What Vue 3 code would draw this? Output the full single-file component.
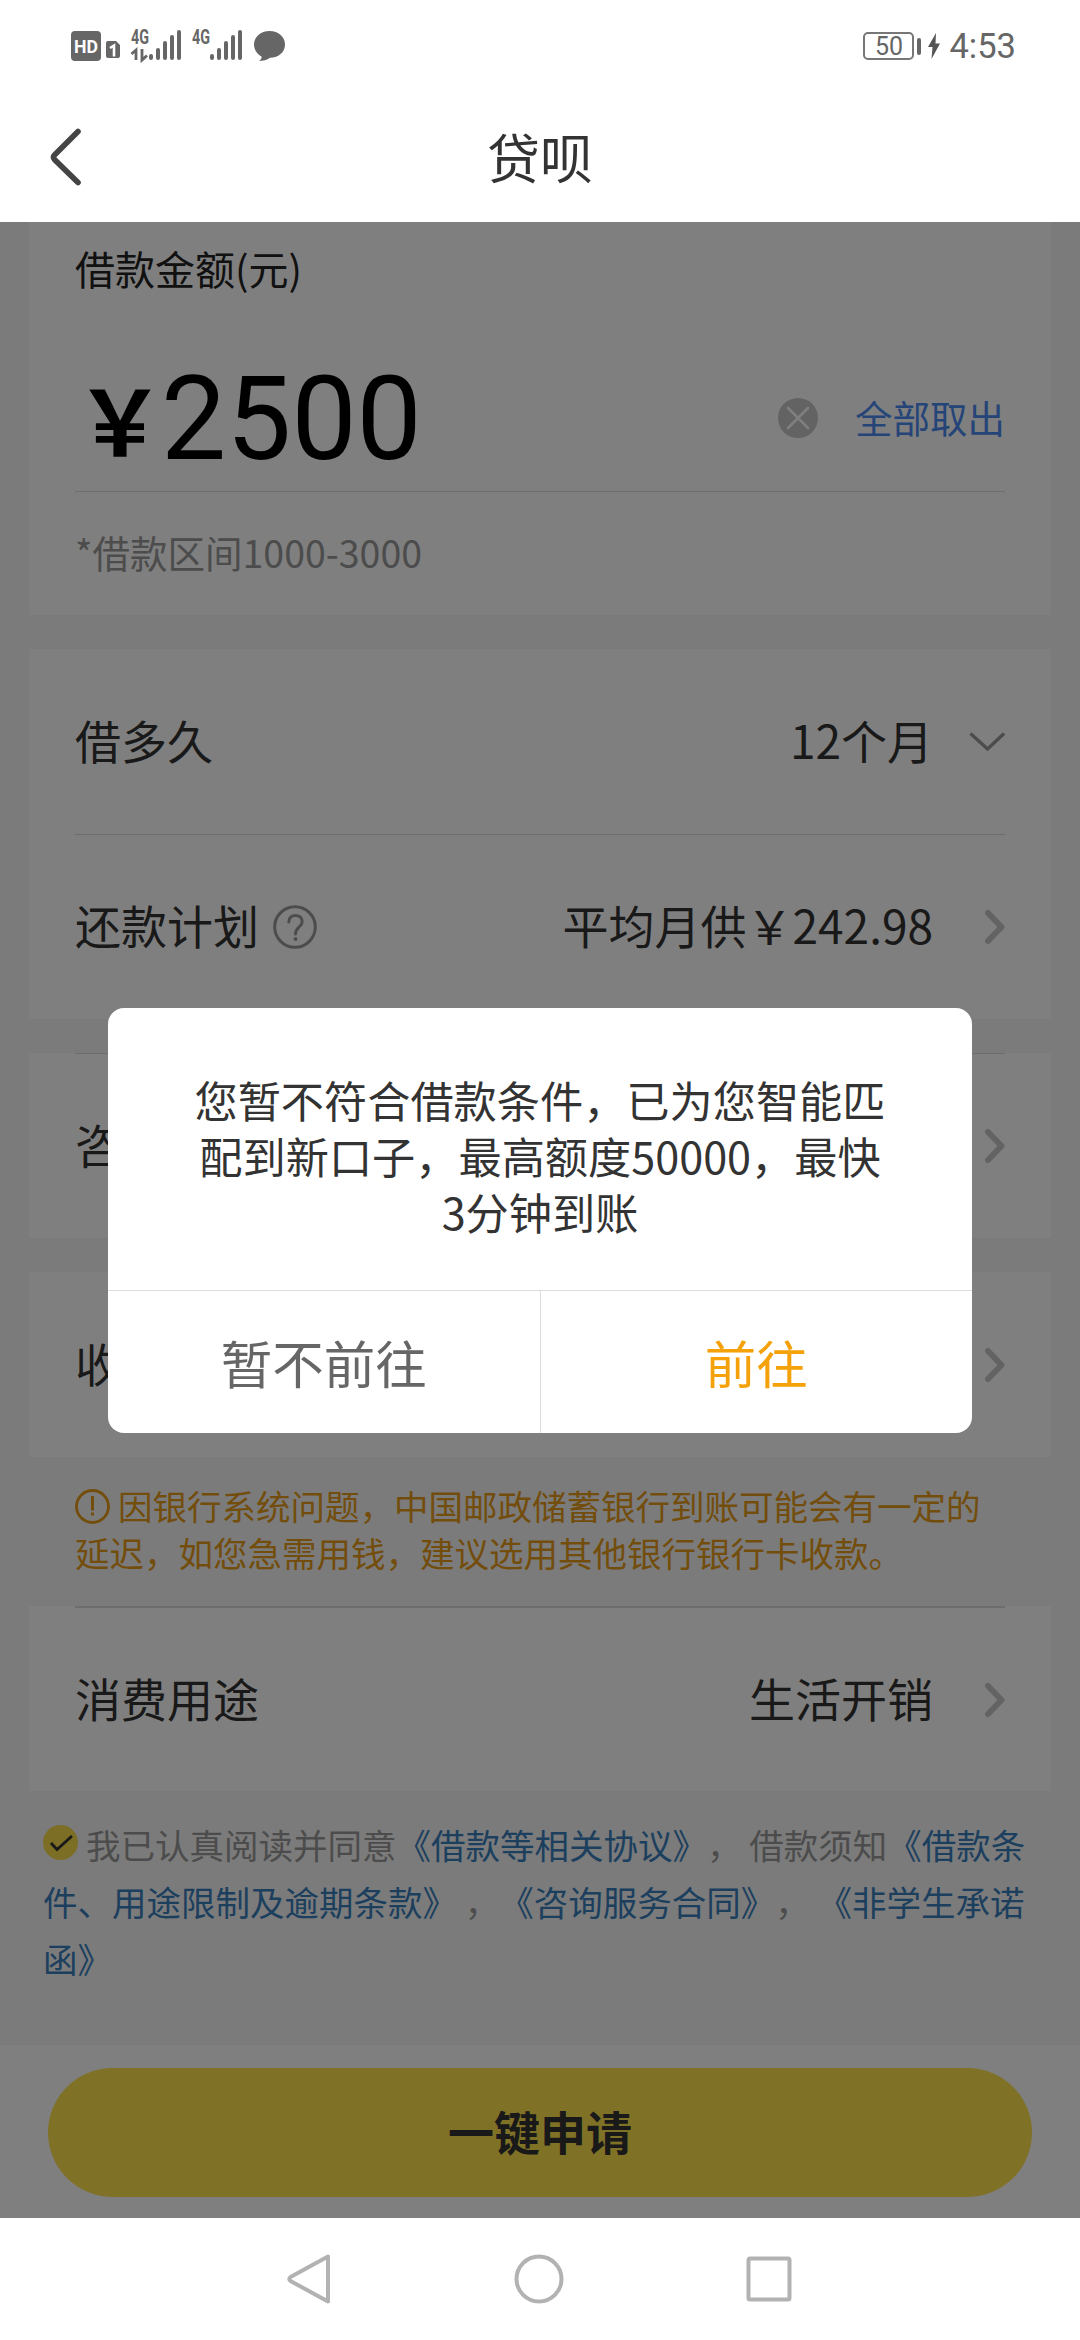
<template>
    <div class="phone">
        <header class="status-bar">
            <svg class="status-icons" width="216" height="50" viewBox="0 -8 216 50">
                <rect x="0" y="2" width="30" height="30" rx="4" fill="#666" />
                <text x="3" y="24" textLength="24" lengthAdjust="spacingAndGlyphs" class="hd">HD</text>
                <path d="M37 12h8l4 4v11q0 2-2 2H37q-2 0-2-2V14q0-2 2-2z" fill="#666" />
                <path d="M39 19l4-2.500v11" fill="none" stroke="#fff" stroke-width="2.600" />
                <text x="60" y="15" textLength="18" lengthAdjust="spacingAndGlyphs" class="net">4G</text>
                <path d="M60.500 25l4.500-4v10M71 20v11l5-4.500" fill="none" stroke="#666" stroke-width="2.800" />
                <path
                    d="M80 27v2M87 21v8M94 14v15M101 8v21M108 3v26"
                    fill="none" stroke="#666" stroke-width="4" stroke-linecap="round"
                />
                <text x="121" y="15" textLength="18" lengthAdjust="spacingAndGlyphs" class="net">4G</text>
                <path
                    d="M141 27v2M148 21v8M155 14v15M162 8v21M169 3v26"
                    fill="none" stroke="#666" stroke-width="4" stroke-linecap="round"
                />
                <path
                    d="M198.500 2c9 0 15.500 6 15.500 13.500S208 28.500 199 28.800c-3 2.200-7 3.200-11 3.200 2-1.500 3-3 2.500-4.500C186 25 183 20.500 183 15.500 183 8 189.500 2 198.500 2z"
                    fill="#666"
                />
            </svg>
            <div class="status-right">
                <span class="battery">50</span>
                <i class="battery-cap"></i>
                <svg width="12" height="26" viewBox="0 0 12 26">
                    <path d="M8 0L0 14h4.500L3.500 26 12 10.500H7.500z" fill="#555" />
                </svg>
                <span class="time">4:53</span>
            </div>
        </header>

        <nav class="title-bar">
            <svg class="back" width="36" height="62" viewBox="0 0 36 62">
                <path
                    d="M30 5.500L6.500 29Q4.500 31 6.500 33.500L30 56.500"
                    fill="none" stroke="#444" stroke-width="5.600" stroke-linecap="round"
                />
            </svg>
            <h1>贷呗</h1>
        </nav>

        <main class="content">
            <section class="card amount-card">
                <div class="amount-label">借款金额(元)</div>
                <div class="amount-row">
                    <span class="yen">￥</span>
                    <span class="amount">{{ amount }}</span>
                    <svg class="clear" width="40" height="40" viewBox="0 0 40 40">
                        <circle cx="20" cy="20" r="20" fill="#c6c6c6" />
                        <path d="M10 10l20 20M30 10L10 30" stroke="#fff" stroke-width="2.600" stroke-linecap="round" />
                    </svg>
                    <span class="take-all">全部取出</span>
                </div>
                <div class="amount-range">*借款区间1000-3000</div>
            </section>

            <template v-for="(group, index) in groups" :key="index">
                <section class="card">
                    <div
                        v-for="row in group.rows" :key="row.label"
                        class="row" :class="{ lined: row.lined, thick: row.thick }"
                    >
                        <span class="label">{{ row.label }}</span>
                        <svg v-if="row.help" class="help" width="44" height="44" viewBox="0 0 44 44">
                            <circle cx="22" cy="22" r="20.300" fill="none" stroke="#999" stroke-width="3" />
                            <path
                                d="M15.800 17c0-9 13.400-8.500 13.400-.5 0 5.500-6.700 5.500-6.700 12.500"
                                fill="none" stroke="#999" stroke-width="3" stroke-linecap="round"
                            />
                            <circle cx="22.500" cy="34" r="2" fill="#999" />
                        </svg>
                        <span class="value">{{ row.value }}</span>
                        <svg v-if="row.down" class="arrow arrow-down" width="36" height="20" viewBox="0 0 36 20">
                            <path d="M1.500 1.500L18.500 17 35 1.500" fill="none" stroke="#999" stroke-width="3.400" />
                        </svg>
                        <svg v-else class="arrow" width="21" height="36" viewBox="0 0 21 36">
                            <path
                                d="M4 4l13.500 14L4 32"
                                fill="none" stroke="#c7c7c7" stroke-width="6" stroke-linecap="round" stroke-linejoin="round"
                            />
                        </svg>
                    </div>
                </section>
                <div v-if="group.notice" class="notice">
                    <p>
                        <svg width="35" height="35" viewBox="0 0 35 35">
                            <circle cx="17.500" cy="17.500" r="16" fill="none" stroke="#e69a17" stroke-width="2.800" />
                            <path d="M17.500 7v14.500M17.500 23.500v3" stroke="#e69a17" stroke-width="3" />
                        </svg>
                        <span>{{ group.notice[0] }}</span>
                    </p>
                    <p>{{ group.notice[1] }}</p>
                </div>
            </template>

            <div class="agreement">
                <p>
                    <svg width="35" height="35" viewBox="0 0 35 35">
                        <circle cx="17.500" cy="17.500" r="17.500" fill="#f9dc4a" />
                        <path d="M8 18l6 6.500L29 11" fill="none" stroke="#333" stroke-width="2.800" />
                    </svg>
                    <span>我已认真阅读并同意<a>《借款等相关协议》</a>， 借款须知<a>《借款条</a></span>
                </p>
                <p><a>件、用途限制及逾期条款》</a> ，<a>《咨询服务合同》</a>， <a>《非学生承诺</a></p>
                <p><a>函》</a></p>
            </div>

            <footer class="apply-bar">
                <button class="apply">一键申请</button>
            </footer>

            <!-- 遮罩和提示框 -->
            <div v-if="dialogVisible" class="mask">
                <div class="dialog">
                    <div class="dialog-text">
                        <p>您暂不符合借款条件，已为您智能匹</p>
                        <p>配到新口子，最高额度50000，最快</p>
                        <p>3分钟到账</p>
                    </div>
                    <div class="dialog-actions">
                        <button @click="dialogVisible = false">暂不前往</button>
                        <button class="go" @click="dialogVisible = false">前往</button>
                    </div>
                </div>
            </div>
        </main>

        <div class="nav-keys">
            <svg width="46" height="52" viewBox="0 0 46 52">
                <path d="M42 3.500v45L4.500 28Q2 26 4.500 24z" fill="none" stroke="#b2b2b2" stroke-width="4" stroke-linejoin="round" />
            </svg>
            <svg width="50" height="50" viewBox="0 0 50 50">
                <circle cx="25" cy="25" r="22.500" fill="none" stroke="#b2b2b2" stroke-width="4" />
            </svg>
            <svg width="46" height="46" viewBox="0 0 46 46">
                <rect x="2.500" y="2.500" width="41" height="41" rx="1.500" fill="none" stroke="#b2b2b2" stroke-width="4" />
            </svg>
        </div>
    </div>
</template>

<script setup>
import { ref } from 'vue';

const amount = ref(2500)
const dialogVisible = ref(true)

// 表單分組，lined 表示該行頂部有分隔線
const groups = [
    {
        rows: [
            { label: '借多久', value: '12个月', down: true },
            { label: '还款计划', value: '平均月供￥242.98', help: true, lined: true },
        ],
    },
    { rows: [{ label: '咨', value: '', lined: true }] },
    {
        rows: [{ label: '收', value: '' }],
        notice: [
            '因银行系统问题，中国邮政储蓄银行到账可能会有一定的',
            '延迟，如您急需用钱，建议选用其他银行银行卡收款。',
        ],
    },
    { rows: [{ label: '消费用途', value: '生活开销', lined: true, thick: true }] },
]
</script>

<style>
body {
    margin: 0;
    background: #fff;
}
</style>

<style scoped>
.phone {
    width: 1080px;
    height: 2340px;
    display: flex;
    flex-direction: column;
    overflow: hidden;
    background: #fff;
    color: #333;
    font-family: "Noto Sans CJK SC", sans-serif;
    text-spacing-trim: space-all;
    white-space: nowrap;
}

p, h1 {
    margin: 0;
    font-weight: 400;
}

svg {
    flex: none;
    display: block;
}

button {
    border: 0;
    padding: 0;
    background: none;
    color: inherit;
    font-family: inherit;
}

/* 狀態欄 */
.status-bar {
    height: 92px;
    box-sizing: border-box;
    padding: 0 64px 0 71px;
    display: flex;
    align-items: center;
    justify-content: space-between;
    font-family: Roboto, sans-serif;
    color: #666;
}

.hd {
    font: 700 19px Roboto, sans-serif;
    fill: #fff;
}

.net {
    font: 700 20px Roboto, sans-serif;
    fill: #666;
}

.status-right {
    display: flex;
    align-items: center;
}

.battery {
    width: 51px;
    height: 28px;
    box-sizing: border-box;
    border: 2px solid #777;
    border-radius: 5px;
    line-height: 25px;
    font-size: 25px;
    text-align: center;
}

.battery-cap {
    width: 4px;
    height: 17px;
    margin: 0 7px 0 3px;
    border-radius: 2px;
    background: #666;
}

.time {
    margin-left: 9px;
    font-size: 34.500px;
    line-height: 36px;
}

.title-bar {
    height: 130px;
    display: grid;
    grid-template-columns: 100px 1fr 100px;
    align-items: center;
}

.back {
    margin: 0 0 1px 48px;
}

.title-bar h1 {
    font-size: 53px;
    line-height: 60px;
    text-align: center;
    padding-bottom: 3px;
}

/* 主體 */
.content {
    position: relative;
    height: 1996px;
    display: flex;
    flex-direction: column;
    background: #f7f7f7;
}

.card {
    margin: 0 29px 34px;
    padding: 0 46px;
    background: #fff;
}

.amount-card {
    height: 393px;
}

.amount-label {
    height: 92px;
    line-height: 92px;
    font-size: 40px;
    color: #222;
}

.amount-row {
    height: 177px;
    display: flex;
    align-items: center;
    border-bottom: 1px solid #ddd;
    color: #000;
}

.yen {
    font-size: 90px;
    line-height: 90px;
    font-weight: 700;
    margin-top: 29px;
}

.amount {
    flex: 1;
    margin: 32px 0 0 -4px;
    font-family: Roboto, sans-serif;
    font-size: 116px;
    line-height: 116px;
}

.clear {
    margin: 31px 37px 0 0;
}

.take-all {
    margin-top: 28px;
    font-size: 37.500px;
    line-height: 40px;
    color: #4a88f0;
}

.amount-range {
    line-height: 119px;
    font-size: 37.500px;
    color: #999;
}

.row {
    height: 185px;
    box-sizing: border-box;
    display: flex;
    align-items: center;
    font-size: 46px;
    line-height: 60px;
}

.lined {
    border-top: 1px solid #d9d9d9;
}

.thick {
    border-top-width: 2px;
}

.label, .value {
    padding-bottom: 6px;
}

.help {
    margin-left: 14px;
}

.value {
    flex: 1;
    text-align: right;
}

.arrow {
    margin-left: 51px;
}

.arrow-down {
    margin-left: 36px;
}

.notice {
    height: 149px;
    box-sizing: border-box;
    margin-top: -34px;
    padding: 25px 75px 0;
    font-size: 34.500px;
    line-height: 46.500px;
    color: #e69a17;
}

.notice p {
    display: flex;
    align-items: center;
}

.notice svg {
    margin: 3px 8px 0 0;
}

.agreement {
    flex: 1;
    margin-top: -9px;
    padding-left: 43px;
    font-size: 34.500px;
    line-height: 57px;
    color: #999;
}

.agreement p {
    display: flex;
    align-items: center;
    white-space: pre;
}

.agreement svg {
    margin: 0 8px 5px 0;
}

.agreement a {
    color: #3b7fbd;
}

.apply-bar {
    height: 173px;
    box-sizing: border-box;
    padding: 23px 48px 0;
    background: #fff;
}

.apply {
    display: block;
    width: 984px;
    height: 129px;
    padding-bottom: 5px;
    border-radius: 65px;
    background: #ffe24c;
    font-size: 46px;
    font-weight: 700;
}

/* 彈窗 */
.mask {
    position: absolute;
    inset: 0;
    display: flex;
    align-items: center;
    justify-content: center;
    background: rgba(0, 0, 0, 0.5);
}

.dialog {
    width: 864px;
    height: 425px;
    border-radius: 16px;
    background: #fff;
    overflow: hidden;
    display: flex;
    flex-direction: column;
}

.dialog-text {
    flex: 1;
    padding-top: 63px;
    font-size: 43.200px;
    line-height: 56px;
    text-align: center;
}

.dialog-actions {
    height: 143px;
    box-sizing: border-box;
    display: flex;
    border-top: 1px solid #ddd;
}

.dialog-actions button {
    flex: 1;
    padding-bottom: 1px;
    font-size: 51.500px;
    color: #666;
}

.dialog-actions .go {
    border-left: 1px solid #ddd;
    color: #f5a10a;
}

/* 底部導航鍵 */
.nav-keys {
    flex: 1;
    padding: 0 288px 0 286px;
    display: flex;
    align-items: center;
    justify-content: space-between;
}
</style>
